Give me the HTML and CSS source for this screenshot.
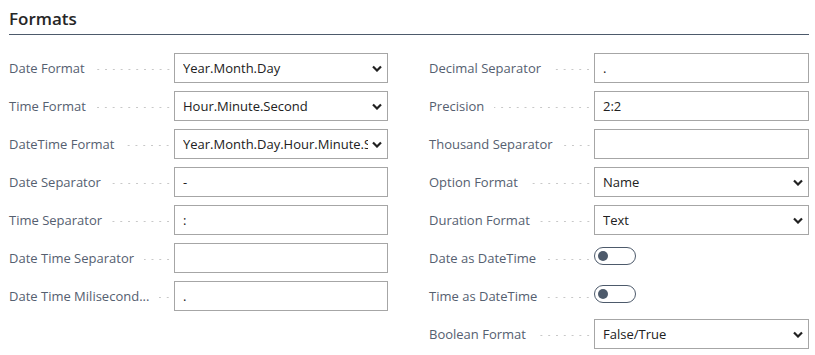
FILE: index.html
```html
<!DOCTYPE html>
<html lang="en">
<head>
    <meta charset="UTF-8">
    <title>Formats</title>
    <link rel="stylesheet" href="styles.css">
</head>
<body>

<div class="section">
    <h2 class="title">Formats</h2>

    <div class="cols">
        <!-- colonne gauche -->
        <div class="col">
            <div class="row">
                <label class="lbl"><span>Date Format</span></label>
                <div class="box select"><span class="val">Year.Month.Day</span><svg class="chev" viewBox="0 0 10 6"><path d="M1 1l4 4 4-4"/></svg></div>
            </div>
            <div class="row">
                <label class="lbl"><span>Time Format</span></label>
                <div class="box select"><span class="val">Hour.Minute.Second</span><svg class="chev" viewBox="0 0 10 6"><path d="M1 1l4 4 4-4"/></svg></div>
            </div>
            <div class="row">
                <label class="lbl"><span>DateTime Format</span></label>
                <div class="box select"><span class="val">Year.Month.Day.Hour.Minute.Second</span><svg class="chev" viewBox="0 0 10 6"><path d="M1 1l4 4 4-4"/></svg></div>
            </div>
            <div class="row">
                <label class="lbl"><span>Date Separator</span></label>
                <div class="box"><span class="val">-</span></div>
            </div>
            <div class="row">
                <label class="lbl"><span>Time Separator</span></label>
                <div class="box"><span class="val">:</span></div>
            </div>
            <div class="row">
                <label class="lbl"><span>Date Time Separator</span></label>
                <div class="box"></div>
            </div>
            <div class="row">
                <label class="lbl"><span>Date Time Milisecond...</span></label>
                <div class="box"><span class="val">.</span></div>
            </div>
        </div>

        <!-- colonne droite -->
        <div class="col">
            <div class="row">
                <label class="lbl"><span>Decimal Separator</span></label>
                <div class="box"><span class="val">.</span></div>
            </div>
            <div class="row">
                <label class="lbl"><span>Precision</span></label>
                <div class="box"><span class="val">2:2</span></div>
            </div>
            <div class="row">
                <label class="lbl"><span>Thousand Separator</span></label>
                <div class="box"></div>
            </div>
            <div class="row">
                <label class="lbl"><span>Option Format</span></label>
                <div class="box select"><span class="val">Name</span><svg class="chev" viewBox="0 0 10 6"><path d="M1 1l4 4 4-4"/></svg></div>
            </div>
            <div class="row">
                <label class="lbl"><span>Duration Format</span></label>
                <div class="box select"><span class="val">Text</span><svg class="chev" viewBox="0 0 10 6"><path d="M1 1l4 4 4-4"/></svg></div>
            </div>
            <div class="row">
                <label class="lbl"><span>Date as DateTime</span></label>
                <div class="toggle"><span class="knob"></span></div>
            </div>
            <div class="row">
                <label class="lbl"><span>Time as DateTime</span></label>
                <div class="toggle"><span class="knob"></span></div>
            </div>
            <div class="row">
                <label class="lbl"><span>Boolean Format</span></label>
                <div class="box select"><span class="val">False/True</span><svg class="chev" viewBox="0 0 10 6"><path d="M1 1l4 4 4-4"/></svg></div>
            </div>
        </div>
    </div>
</div>

</body>
</html>
```

FILE: styles.css
```css
body {
    margin: 0;
    background: #ffffff;
    font-family: "Open Sans", "Noto Sans", sans-serif;
}

.section {
    padding: 8px 6px 0 9px;
}

.title {
    margin: 0;
    font-size: 17px;
    font-weight: 600;
    color: #262626;
    line-height: 22px;
    padding-bottom: 4px;
    border-bottom: 1px solid #4d5a6b;
}

.cols {
    display: grid;
    grid-template-columns: 379px 380px;
    column-gap: 41px;
    padding-top: 18px;
}

.row {
    display: flex;
    align-items: center;
    height: 30px;
    margin-bottom: 8px;
}

/* libellé + pointillés */
.lbl {
    width: 165px;
    flex: none;
    display: flex;
    align-items: center;
    font-size: 13px;
    color: #556070;
    white-space: nowrap;
}

.lbl::after {
    content: "";
    flex: 1;
    height: 3px;
    margin: 3px 2px 0 10px;
    background-image: radial-gradient(circle, #c8c8c8 0.8px, transparent 1.1px);
    background-size: 7.8px 3px;
    background-repeat: repeat-x;
    background-position: right center;
}

.box {
    flex: 1;
    height: 30px;
    box-sizing: border-box;
    border: 1px solid #a6a6a6;
    display: flex;
    align-items: center;
    padding: 0 8px;
    font-size: 13px;
    color: #212121;
    overflow: hidden;
}

.val {
    flex: 1;
    white-space: nowrap;
    overflow: hidden;
}

.select {
    padding-right: 3px;
}

.chev {
    flex: none;
    width: 10px;
    height: 7px;
    margin: 1px 2px 0 4px;
}

.chev path {
    fill: none;
    stroke: #212121;
    stroke-width: 2.2;
}

/* interrupteur */
.toggle {
    width: 42px;
    height: 18px;
    box-sizing: border-box;
    border: 1px solid #4d5a6b;
    border-radius: 9px;
    display: flex;
    align-items: center;
    padding-left: 3px;
    margin-top: -4px;
}

.knob {
    width: 10px;
    height: 10px;
    border-radius: 50%;
    background: #4d5a6b;
}
```
